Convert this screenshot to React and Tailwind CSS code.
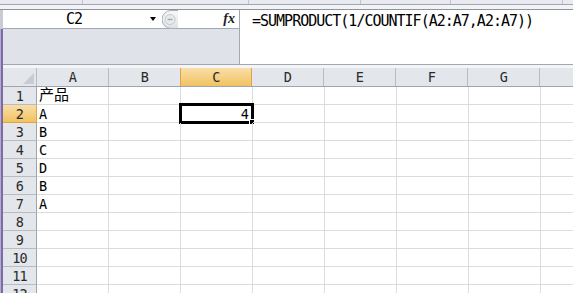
const mono = "font-['DejaVu_Sans_Mono','Noto_Sans_CJK_SC',monospace]";

const COLS = ['A', 'B', 'C', 'D', 'E', 'F', 'G'];
const COL_A = ['产品', 'A', 'B', 'C', 'D', 'B', 'A'];
const ROWS = [1, 2, 3, 4, 5, 6, 7, 8, 9, 10, 11, 12];

const Pill = () => (
  <svg width="16" height="19" viewBox="0 0 16 19">
    <defs>
      <linearGradient id="pill" x1="0" y1="0" x2="0" y2="1">
        <stop offset="0" stopColor="#f8f9fb" />
        <stop offset="1" stopColor="#dde0e5" />
      </linearGradient>
    </defs>
    <path d="M16 0.5 H9 A9 9 0 0 0 9 18.5 H16" fill="url(#pill)" stroke="#a9aeb6" />
    <circle cx="8" cy="9.5" r="5" fill="#e9ebee" stroke="#c4c8ce" />
    <line x1="5.5" y1="9.5" x2="10.5" y2="9.5" stroke="#a3a8b0" strokeWidth="1.5" />
  </svg>
);

const NameBox = () => (
  <div className="w-[237px] shrink-0 flex flex-col border-r border-[#a3a8b0]">
    <div className="h-[19px] shrink-0 flex items-center bg-white border-b border-[#a3a8b0]">
      <div className={`w-[142px] text-center text-[15px] leading-[18px] tracking-[-1px] text-black ${mono}`}>C2</div>
      <div className="ml-[5px] w-0 h-0 border-l-[3.5px] border-r-[3.5px] border-t-[4px] border-l-transparent border-r-transparent border-t-black" />
      <div className="ml-[6px] flex">
        <Pill />
      </div>
      <div className="ml-auto mr-[4px] font-['Liberation_Serif',serif] italic font-bold text-[14px] leading-[14px] text-[#222]">
        fx
      </div>
    </div>
    <div className="flex-1 bg-[#dfe2e8]" />
  </div>
);

const HeaderRow = () => (
  <div className={`flex shrink-0 h-[19px] border-b border-[#9da5af] bg-[#e3e6eb] text-[13.5px] leading-[13px] tracking-[-0.8px] text-[#2a2a2a] ${mono}`}>
    <div className="relative w-[34px] shrink-0 border-r border-[#b7bcc4]">
      <svg className="absolute right-[2px] bottom-[2px]" width="11" height="11" viewBox="0 0 11 11">
        <polygon points="11,0 11,11 0,11" fill="#c8ccd2" />
      </svg>
    </div>
    {COLS.map((c) =>
      c === 'C' ? (
        <div
          key={c}
          className="w-[72px] shrink-0 -ml-px border-l border-r border-[#e2a344] bg-gradient-to-b from-[#f9dea7] to-[#f1c25f] flex items-end justify-center pb-[2px]"
        >
          {c}
        </div>
      ) : (
        <div key={c} className="w-[72px] shrink-0 border-r border-[#b7bcc4] flex items-end justify-center pb-[2px]">
          {c}
        </div>
      )
    )}
    <div className="flex-1" />
  </div>
);

const Row = ({ n }) => {
  const val = COL_A[n - 1] || '';
  const active = n === 2;
  return (
    <div className={`flex shrink-0 h-[18px] text-[13.5px] leading-[13px] tracking-[-0.8px] text-black ${mono}`}>
      <div
        className={`w-[34px] shrink-0 border-r border-b flex items-end justify-center pb-[1px] text-[#2a2a2a] ${
          active
            ? 'bg-gradient-to-b from-[#f9dea7] to-[#f1c25f] border-[#e2a344]'
            : 'bg-[#e3e6eb] border-b-[#b7bcc4] border-r-[#9da5af]'
        }`}
      >
        {n}
      </div>
      {COLS.map((c) => (
        <div key={c} className="relative w-[72px] shrink-0 border-r border-b border-[#dadcdd] flex items-end pb-[1px]">
          {c === 'A' && (
            <span className={`pl-[2px] ${n === 1 ? 'text-[15px] tracking-normal leading-[15px]' : ''}`}>{val}</span>
          )}
          {c === 'C' && active && (
            <>
              <span className="ml-auto pr-[4px]">4</span>
              <div className="absolute -left-[2px] -top-[2px] w-[75px] h-[21px] border-[3px] border-black">
                <div className="absolute -right-[4px] -bottom-[4px] w-[6px] h-[6px] bg-black border border-white" />
              </div>
            </>
          )}
        </div>
      ))}
      <div className="flex-1 border-b border-[#dadcdd]" />
    </div>
  );
};

export default function App() {
  return (
    <div className="w-[573px] h-[293px] overflow-hidden bg-white flex flex-col">
      {/* ribbon remnant */}
      <div className="flex flex-col shrink-0">
        <div className="h-[4px] flex bg-[#e9eaf1]">
          <div className="w-[83px] border-r border-[#c3c6ce]" />
          <div className="w-[166px] border-r border-[#c3c6ce]" />
          <div className="w-[112px] border-r border-[#c3c6ce]" />
          <div className="w-[90px] border-r border-[#c3c6ce]" />
          <div className="w-[112px] border-r border-[#c3c6ce]" />
          <div className="flex-1" />
        </div>
        <div className="h-[1px] bg-[#a3a7ae]" />
        <div className="h-[4px] bg-[#f2f3f6]" />
        <div className="h-[1px] bg-[#8e939b]" />
      </div>

      <div className="flex flex-1 min-h-0">
        <div className="w-[3px] shrink-0 flex flex-col">
          <div className="h-[19px] shrink-0 bg-[#c9ccd3]" />
          <div className="flex-1 flex">
            <div className="w-[1px] bg-[#b6a9d4]" />
            <div className="w-[2px] bg-[#7b6ca6]" />
          </div>
        </div>

        <div className="flex-1 flex flex-col min-w-0">
          {/* formula bar */}
          <div className="flex shrink-0 h-[55px] border-b border-[#a3a8b0]">
            <NameBox />
            <div className={`flex-1 bg-white pl-[12px] pt-[2px] text-[15px] leading-[18px] tracking-[-1px] text-black whitespace-nowrap ${mono}`}>
              =SUMPRODUCT(1/COUNTIF(A2:A7,A2:A7))
            </div>
          </div>
          <div className="h-[3px] shrink-0 bg-[#f4f5f7]" />

          <HeaderRow />
          {ROWS.map((n) => (
            <Row key={n} n={n} />
          ))}
        </div>
      </div>
    </div>
  );
}
